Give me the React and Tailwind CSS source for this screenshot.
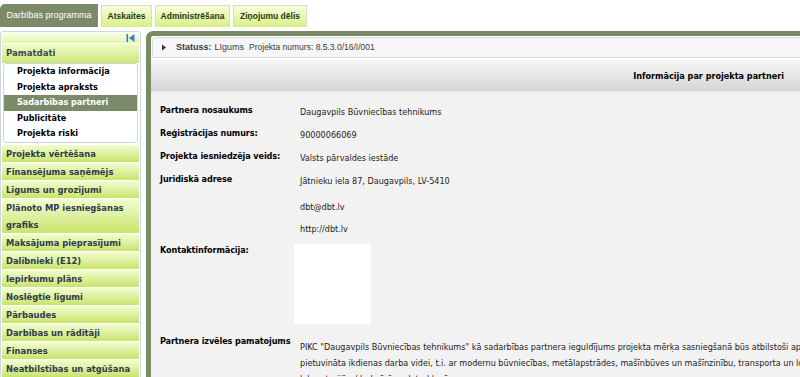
import { useState } from 'react'

const subItems = [
  'Projekta informācija',
  'Projekta apraksts',
  'Sadarbības partneri',
  'Publicitāte',
  'Projekta riski',
]

const menuItems = [
  'Projekta vērtēšana',
  'Finansējuma saņēmējs',
  'Līgums un grozījumi',
  'Plānoto MP iesniegšanas grafiks',
  'Maksājuma pieprasījumi',
  'Dalībnieki (E12)',
  'Iepirkumu plāns',
  'Noslēgtie līgumi',
  'Pārbaudes',
  'Darbības un rādītāji',
  'Finanses',
  'Neatbilstības un atgūšana',
  'Dokumenti',
]

const tabs = [
  { label: 'Darbības programma', w: 'w-[98px]' },
  { label: 'Atskaites', w: 'w-[51px]' },
  { label: 'Administrēšana', w: 'w-[75px]' },
  { label: 'Ziņojumu dēlis', w: 'w-[74px]' },
]

const arial = { fontFamily: '"Liberation Sans", Arial, sans-serif' }

function Tab({ label, w, active }) {
  if (active) {
    return (
      <div className={`${w} h-[23px] flex items-center justify-center rounded-tl-[5px] bg-[#7b8a67] text-white text-[9px]`}>
        {label}
      </div>
    )
  }
  return (
    <div className={`${w} h-[22px] flex items-center justify-center border border-b-0 border-[#d6dccb] bg-gradient-to-b from-[#f8fdd8] to-[#d9ef84] text-[#2a3520] text-[8.5px] font-bold`}>
      {label}
    </div>
  )
}

function Row({ label, children }) {
  return (
    <div className="flex">
      <div className="w-[140px] shrink-0 font-bold text-[9px] tracking-[-0.1px] leading-[13px] text-black">{label}</div>
      <div className="flex-1 text-[9px] leading-[13px] text-[#222] pt-[2px]">{children}</div>
    </div>
  )
}

export default function App() {
  const [selected, setSelected] = useState('Sadarbības partneri')

  return (
    <div
      className="w-[800px] h-[377px] overflow-hidden bg-white"
      style={{ fontFamily: '"DejaVu Sans Condensed", "DejaVu Sans", Verdana, sans-serif' }}
    >
      {/* tabs */}
      <div className="flex items-end gap-[3px] pt-[4px] h-[27px]" style={arial}>
        {tabs.map((t, i) => (
          <Tab key={t.label} label={t.label} w={t.w} active={i === 0} />
        ))}
      </div>

      <div className="flex gap-[5px] mt-[4px]">
        {/* sidebar */}
        <div className="w-[141px] shrink-0 border border-b-0 border-[#c9d6e6] rounded-t-[4px] px-[1px] h-[360px]">
          <div className="h-[11px] bg-gradient-to-b from-[#fbfff0] to-[#e4f6a6] flex justify-end items-center pr-[4px]">
            <svg width="9" height="8" viewBox="0 0 9 8">
              <rect x="0.5" y="0" width="1.6" height="8" fill="#3a7bd5" />
              <path d="M8.5 0 L3 4 L8.5 8 Z" fill="#3a7bd5" />
            </svg>
          </div>
          <div className="h-[19px] mt-[1px] flex items-center px-[4px] bg-gradient-to-b from-[#f1fbc8] to-[#cde773] text-[#3b4a52] text-[9.5px] font-bold">
            Pamatdati
          </div>
          <div className="mx-[1px] bg-white border border-[#c9d6e6] rounded-[3px] flex flex-col">
            {subItems.map((s) => (
              <div
                key={s}
                onClick={() => setSelected(s)}
                className={
                  s === selected
                    ? 'h-[15.5px] flex items-center pl-[13px] bg-[#7b8a67] text-white text-[9px] font-bold cursor-pointer whitespace-nowrap'
                    : 'h-[15.5px] flex items-center pl-[13px] text-black text-[9px] font-bold cursor-pointer whitespace-nowrap'
                }
              >
                {s}
              </div>
            ))}
          </div>
          <div className="flex flex-col gap-[1px] mt-[2px]">
            {menuItems.map((m) => (
              <div
                key={m}
                className="min-h-[17px] flex items-center px-[4px] leading-[17px] bg-gradient-to-b from-[#f3fcd0] to-[#c9e468] text-[#2f3b4c] text-[9.3px] font-bold"
              >
                {m}
              </div>
            ))}
          </div>
        </div>

        {/* main */}
        <div className="flex-1 min-w-0 h-[346px] border-l-[5px] border-t-[5px] border-[#7b8a67] rounded-tl-[7px] bg-white flex flex-col overflow-hidden">
          <div
            className="h-[21px] shrink-0 ml-[1px] mt-[1px] flex items-center px-[8px] bg-[#f6f6f6] border-t border-l border-b border-[#dcdcdc] rounded-tl-[4px] text-[#3a3a3a] whitespace-nowrap"
            style={arial}
          >
            <svg width="6" height="7" viewBox="0 0 6 7" className="mr-[9px]">
              <path d="M1 0.5 L5 3.5 L1 6.5 Z" fill="#333" />
            </svg>
            <span className="text-[9px] font-bold mr-[3px]">Statuss:</span>
            <span className="text-[9px] mr-[5px]">Līgums</span>
            <span className="text-[8.5px]">Projekta numurs: 8.5.3.0/16/I/001</span>
          </div>
          <div className="h-[32px] shrink-0 mt-[2px] pt-[3px] flex items-center justify-end pr-[16px] bg-gradient-to-b from-[#f6f6f6] to-[#d6d6d6] border-b border-[#e6e6e6] text-[9px] font-bold text-black">
            Informācija par projekta partneri
          </div>
          <div className="flex-1 bg-[#f2f2f2] pl-[9px] pt-[12px] flex flex-col gap-[8px]">
            <Row label="Partnera nosaukums">Daugavpils Būvniecības tehnikums</Row>
            <Row label="Reģistrācijas numurs:">90000066069</Row>
            <Row label="Projekta iesniedzēja veids:">Valsts pārvaldes iestāde</Row>
            <Row label="Juridiskā adrese">
              <div className="flex flex-col">
                <span>Jātnieku iela 87, Daugavpils, LV-5410</span>
                <span className="mt-[13px]">dbt@dbt.lv</span>
                <span className="mt-[9px]">http://dbt.lv</span>
              </div>
            </Row>
            <div className="flex">
              <div className="w-[134px] shrink-0 font-bold text-[9px] tracking-[-0.1px] leading-[13px] text-black">
                Kontaktinformācija:
              </div>
              <div className="w-[77px] h-[80px] bg-white" />
            </div>
            <div className="flex mt-[3px]">
              <div className="w-[140px] shrink-0 font-bold text-[9px] tracking-[-0.1px] leading-[13px] text-black whitespace-nowrap">
                Partnera izvēles pamatojums
              </div>
              <div className="shrink-0 text-[9px] leading-[16px] text-[#222] pt-[4px] whitespace-nowrap">
                PIKC "Daugavpils Būvniecības tehnikums" kā sadarbības partnera ieguldījums projekta mērķa sasniegšanā būs atbilstoši aprīkota
                <br />
                pietuvināta ikdienas darba videi, t.i. ar modernu būvniecības, metālapstrādes, mašīnbūves un mašīnzinību, transporta un loģistikas
                <br />
                laboratorijām/darbnīcām, datorklasēm.
                <br />
                Sadarbības ietvaros tiks organizētas kopīgas mācības un pieredzes apmaiņas pasākumi.
              </div>
            </div>
          </div>
        </div>
      </div>
    </div>
  )
}
